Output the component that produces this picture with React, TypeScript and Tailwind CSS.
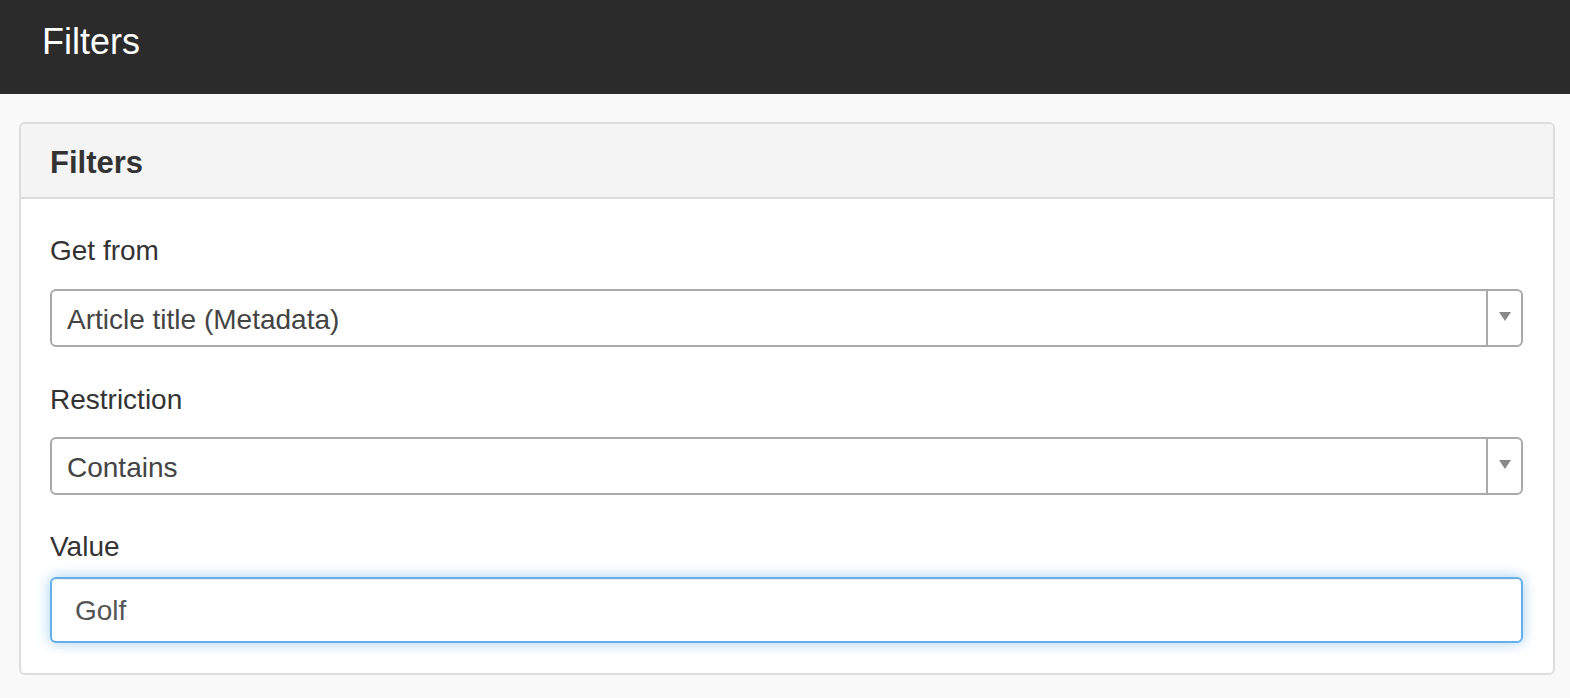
import React from 'react';

const font = { fontFamily: '"Liberation Sans", Arial, sans-serif' };

function SelectBox({ value }: { value: string }) {
  return (
    <div className="flex h-[58px] items-stretch rounded-[6px] border-2 border-[#aaa] bg-white">
      <div className="flex flex-1 items-center pl-[15px] pt-[3px] text-[28px] text-[#444]">{value}</div>
      <div className="flex w-[35px] items-center justify-center border-l-2 border-[#aaa]">
        <span className="mb-[3px] block h-0 w-0 border-l-[6px] border-r-[6px] border-t-[9px] border-l-transparent border-r-transparent border-t-[#888]" />
      </div>
    </div>
  );
}

export default function App() {
  return (
    <div className="min-h-[698px] bg-[#f9f9f9]" style={font}>
      <div className="flex h-[94px] items-start bg-[#2b2b2b] pl-[42px] pt-[24px]">
        <h1 className="text-[36px] leading-[36px] text-white">Filters</h1>
      </div>

      <div className="ml-[19px] mr-[15px] mt-[28px] rounded-[6px] border-2 border-[#ddd] bg-white">
        <div className="flex h-[75px] items-center rounded-t-[4px] border-b-2 border-[#ddd] bg-[#f4f4f4] pl-[29px] pt-[5px]">
          <h2 className="text-[31px] font-bold text-[#333]">Filters</h2>
        </div>

        <div className="pb-[30px] pl-[29px] pr-[30px] pt-[32px]">
          <label className="mb-[18px] block text-[28px] leading-[40px] text-[#333]">Get from</label>
          <SelectBox value="Article title (Metadata)" />

          <label className="mb-[17px] mt-[33px] block text-[28px] leading-[40px] text-[#333]">Restriction</label>
          <SelectBox value="Contains" />

          <label className="mb-[10px] mt-[32px] block text-[28px] leading-[40px] text-[#333]">Value</label>
          <input
            readOnly
            value="Golf"
            className="block h-[66px] w-full rounded-[6px] border-2 border-[#66afe9] bg-white px-[23px] pt-[2px] text-[28px] text-[#555] shadow-[inset_0_1px_1px_rgba(0,0,0,0.075),0_0_14px_rgba(102,175,233,0.6)] outline-none"
            style={font}
          />
        </div>
      </div>
    </div>
  );
}
